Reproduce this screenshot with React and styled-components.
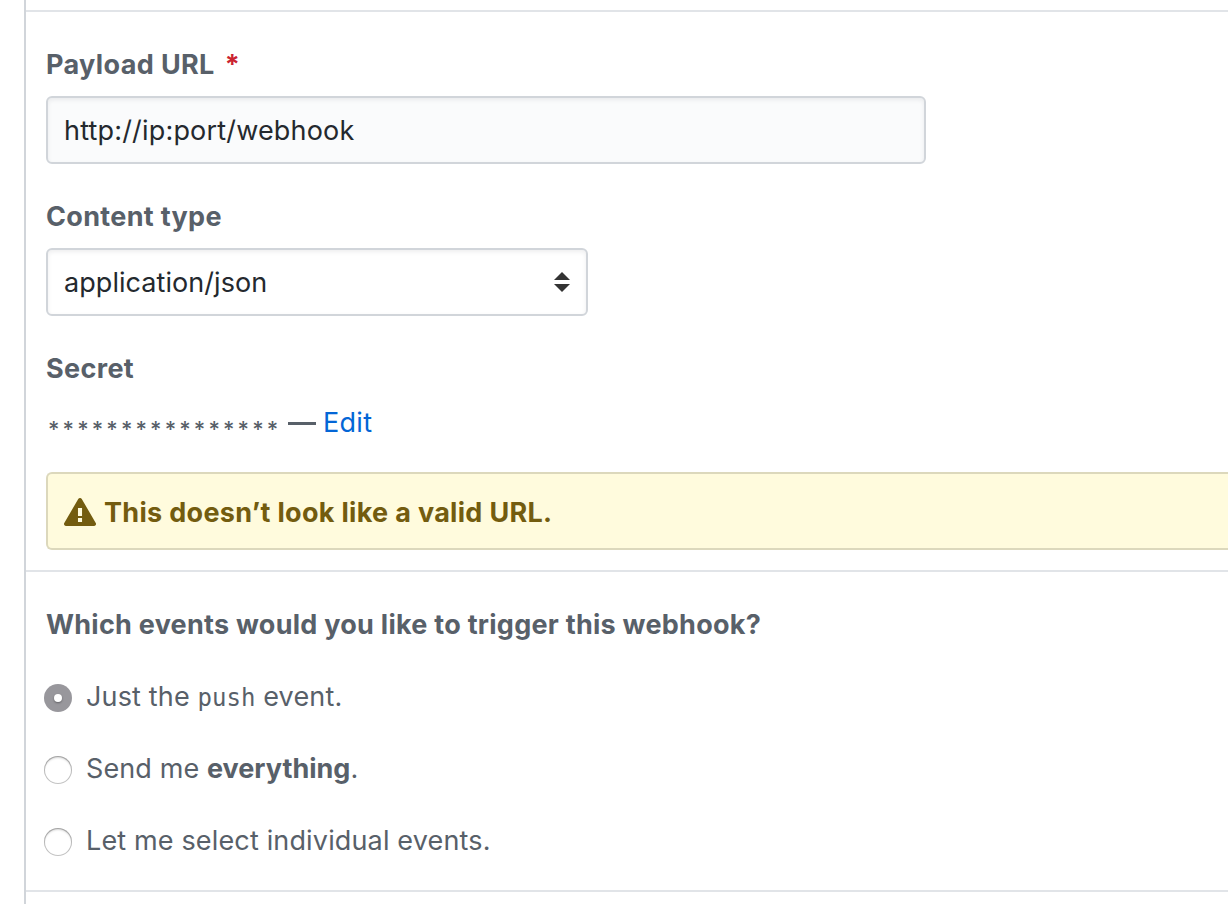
import React from "react";
import styled, { createGlobalStyle, css } from "styled-components";

const GlobalStyle = createGlobalStyle`
  *, *::before, *::after { box-sizing: border-box; }
  html, body { margin: 0; background: #fff; overflow: hidden; }
  body { font-family: Inter, "Liberation Sans", sans-serif; font-size: 27px; line-height: 42px; color: #586069; }
`;

const Page = styled.main`
  height: 904px;
  padding-left: 24px;
  overflow: hidden;
`;

const Panel = styled.form`
  height: 100%;
  border-left: 2px solid #d1d5da;
  padding-top: 10px;
`;

const Section = styled.section`
  height: ${({ $height }) => $height}px;
  border-top: 2px solid #e1e4e8;
  padding: 32px 0 0 20px;
`;

const Field = styled.div`
  margin-bottom: 32px;
`;

const Text = styled.span`
  letter-spacing: ${({ $track = 0 }) => $track}px;
`;

const Label = styled.label`
  display: block;
  height: 42px;
  margin-bottom: 10px;
  font-weight: 680;
  white-space: pre;
  letter-spacing: ${({ $track = 0 }) => $track}px;
`;

const Question = styled.h2`
  height: 42px;
  margin: 0 0 30px;
  font-size: 27px;
  font-weight: 680;
  letter-spacing: 0.26px;
`;

const Required = styled.span`
  margin-left: 10px;
  color: #cb2431;
`;

const control = css`
  display: flex;
  align-items: center;
  height: 68px;
  padding: 0 16px;
  border: 2px solid #d1d5da;
  border-radius: 6px;
  box-shadow: inset 0 2px 4px rgba(27, 31, 35, 0.075);
  color: #24292e;
  font: inherit;
  outline: none;
  letter-spacing: ${({ $track = 0 }) => $track}px;
`;

const Input = styled.input`
  ${control}
  width: 880px;
  background: #fafbfc;
`;

const Select = styled.div`
  ${control}
  width: 542px;
  justify-content: space-between;
  background: #fff;
`;

const SelectValue = styled.span`
  padding-top: 2px;
`;

const SecretRow = styled.div`
  display: flex;
  height: 42px;
  margin: 12px 0 28px;
  white-space: pre;
`;

const Stars = styled.span`
  width: 241px;
  padding: 6px 0 0 2px;
  font-size: 22px;
  font-weight: 500;
  letter-spacing: 3.13px;
`;

const Dash = styled.span`
  width: 28px;
  height: 3px;
  margin: 20px 7px 0 1px;
  background: #586069;
`;

const Link = styled.a`
  color: #0366d6;
  text-decoration: none;
  letter-spacing: ${({ $track = 0 }) => $track}px;
`;

const Warning = styled.div`
  display: flex;
  align-items: center;
  gap: 8px;
  height: 78px;
  padding: 2px 0 0 16px;
  border: 2px solid #dcd8bc;
  border-right: 0;
  border-radius: 6px 0 0 6px;
  background: #fffbdd;
  color: #735c0f;
  font-weight: 680;
  letter-spacing: ${({ $track = 0 }) => $track}px;
`;

const WarningText = styled.span`
  padding-top: 2px;
`;

const Option = styled.label`
  display: flex;
  align-items: center;
  height: 42px;
  margin: 0 0 30px -2px;
  white-space: pre;
`;

const Radio = styled.span`
  display: grid;
  place-items: center;
  width: 28px;
  height: 28px;
  margin: 1px 14px 0 0;
  border-radius: 50%;
  background: ${({ $on }) => ($on ? "#98979c" : "#fff")};
  box-shadow: ${({ $on }) =>
    $on ? "none" : "inset 0 0 0 1px rgba(0,0,0,.24), inset 0 2px 2px rgba(0,0,0,.16)"};

  &::after {
    content: "";
    display: ${({ $on }) => ($on ? "block" : "none")};
    width: 8px;
    height: 8px;
    border-radius: 50%;
    background: #fff;
    box-shadow: 0 1px 2px rgba(0, 0, 0, 0.35);
  }
`;

const Code = styled.code`
  padding-top: 1px;
  font-family: "DejaVu Sans Mono", monospace;
  font-size: 24px;
`;

const Strong = styled.strong`
  font-weight: 680;
`;

const SelectArrows = () => (
  <svg width="16" height="20" viewBox="0 0 16 20" fill="#333" aria-hidden="true">
    <path d="M0 8 8 0l8 8zM0 12h16l-8 8z" />
  </svg>
);

const AlertIcon = () => (
  <svg width="32" height="32" viewBox="0 0 16 16" fill="currentColor" aria-hidden="true">
    <path
      fillRule="evenodd"
      d="M8.893 1.5c-.183-.31-.52-.5-.887-.5s-.703.19-.886.5L.138 13.499a.98.98 0 0 0 0 1.001c.193.31.53.501.886.501h13.964c.367 0 .704-.19.877-.5a1.03 1.03 0 0 0 .01-1.002L8.893 1.5zm.133 11.497H6.987v-2.003h2.039v2.003zm0-3.004H6.987V5.987h2.039v4.006z"
    />
  </svg>
);

export default function App() {
  return (
    <>
      <GlobalStyle />
      <Page>
        <Panel>
          <Section $height={560}>
            <Field>
              <Label htmlFor="payload" $track={0.37}>
                Payload URL<Required>*</Required>
              </Label>
              <Input id="payload" $track={0.18} defaultValue="http://ip:port/webhook" />
            </Field>
            <Field>
              <Label $track={0.32}>Content type</Label>
              <Select $track={0.06} role="combobox" aria-label="Content type">
                <SelectValue>application/json</SelectValue>
                <SelectArrows />
              </Select>
            </Field>
            <Label $track={0.35}>Secret</Label>
            <SecretRow>
              <Stars>****************</Stars>
              <Dash />
              <Link $track={0.3} href="#">Edit</Link>
            </SecretRow>
            <Warning $track={0.31} role="alert">
              <AlertIcon />
              <WarningText>This doesn’t look like a valid URL.</WarningText>
            </Warning>
          </Section>
          <Section $height={320}>
            <Question>Which events would you like to trigger this webhook?</Question>
            <Option>
              <Radio $on />
              <Text $track={0.15}>Just the </Text>
              <Code>push</Code>
              <Text $track={0.2}> event.</Text>
            </Option>
            <Option>
              <Radio />
              <Text $track={0.1}>Send me </Text>
              <Strong>everything</Strong>
              <Text>.</Text>
            </Option>
            <Option>
              <Radio />
              <Text $track={0.15}>Let me select individual events.</Text>
            </Option>
          </Section>
          <Section $height={14} />
        </Panel>
      </Page>
    </>
  );
}
